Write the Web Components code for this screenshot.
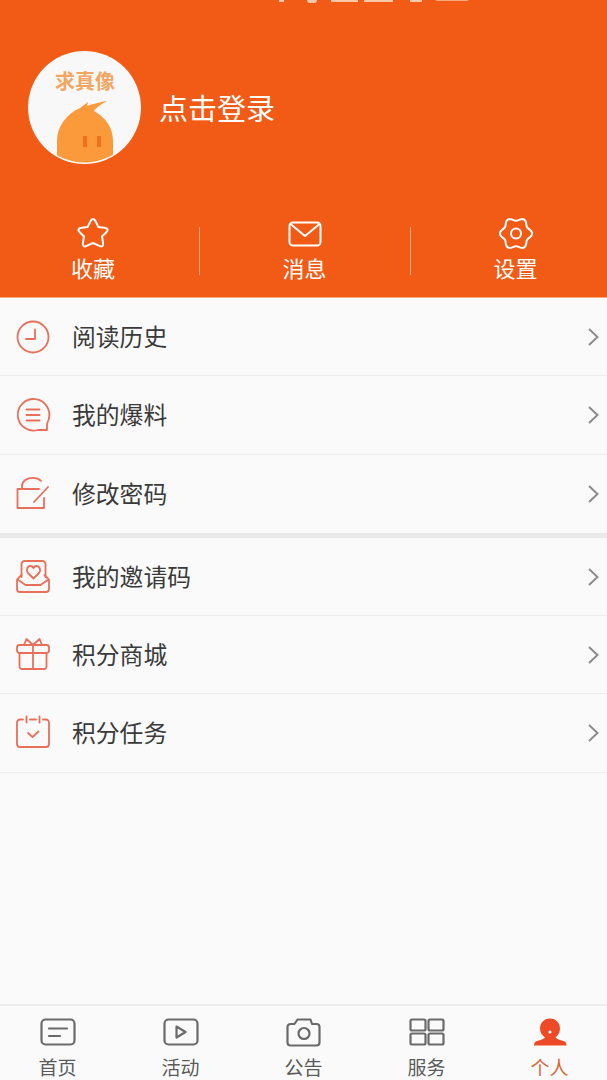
<!DOCTYPE html>
<html>
<head>
<meta charset="utf-8">
<style>
  html, body { margin: 0; padding: 0; }
  body { width: 607px; height: 1080px; overflow: hidden; background: #fafafa; font-family: "Noto Sans CJK SC", "Noto Sans", sans-serif; }
</style>
</head>
<body>
<app-page>
  <profile-header></profile-header>
  <menu-list>
    <menu-row icon="clock" label="阅读历史"></menu-row>
    <menu-row icon="chat" label="我的爆料"></menu-row>
    <menu-row icon="lock" label="修改密码"></menu-row>
  </menu-list>
  <menu-list class="second">
    <menu-row icon="invite" label="我的邀请码"></menu-row>
    <menu-row icon="gift" label="积分商城"></menu-row>
    <menu-row icon="task" label="积分任务"></menu-row>
  </menu-list>
  <tab-bar></tab-bar>
</app-page>
<script>
const menuIcons = {
  clock: `<circle cx="17" cy="17" r="15.500"/><path d="M19 9.500V19H10"/>`,
  chat: `<path d="M31 32h-9A15.800 15.800 0 1 1 32.500 22c-.8 2-1.500 3-1.500 5z"/><path d="M10.500 11.500h13M10.500 17h13M10.500 22.500h13"/>`,
  lock: `<path d="M23 12H1.500v19H28V21"/><path d="M6 12V9C6 4 11 .8 17 .8c3 0 6 1 8 3"/><path d="M18 25L32 10"/>`,
  invite: `<path d="M5.500 17V4a3 3 0 0 1 3-3h18a3 3 0 0 1 3 3v13"/><path d="M5.500 15l-3 3a3 3 0 0 0-1.500 2.500V29a3 3 0 0 0 3 3h26a3 3 0 0 0 3-3v-8.500a3 3 0 0 0-1.500-2.500l-3-3"/><path d="M1.500 19.500l8 5.500h15l8-5.500"/><path d="M17.500 18.500L12 13C9.500 10 11.500 6 14.500 6 16 6 17 7 17.500 8 18 7 19 6 20.500 6 23.500 6 25.500 10 23 13z"/>`,
  gift: `<rect x="1" y="7" width="32" height="8" rx="2.500"/><path d="M3.500 15v13.500a2.500 2.500 0 0 0 2.500 2.500h22a2.500 2.500 0 0 0 2.500-2.500V15"/><path d="M17 7v24"/><path d="M17 7L10.500 1 8 7M17 7l6.500-6L26 7"/>`,
  task: `<path d="M7 3.500H4a3 3 0 0 0-3 3V28a3 3 0 0 0 3 3h26a3 3 0 0 0 3-3V6.500a3 3 0 0 0-3-3h-3"/><path d="M14 3.500h6"/><path d="M10.500 .5v6M23.500 .5v6"/><path d="M12 17l4.500 4 6-5.500"/>`
};

// wavy six lobed outline for the settings icon
function gearPath(cx, cy) {
  let d = '';
  for (let i = 0; i < 72; i++) {
    const a = i * Math.PI / 36;
    const r = 14.4 + 1.7 * Math.cos(6 * a);
    d += (i ? 'L' : 'M') + (cx + r * Math.cos(a)).toFixed(2) + ' ' + (cy + r * Math.sin(a)).toFixed(2);
  }
  return d + 'z';
}

class AppPage extends HTMLElement {
  constructor() {
    super();
    this.attachShadow({mode: 'open'});
    this.shadowRoot.innerHTML = `
      <style>
        :host { display: flex; flex-direction: column; width: 607px; height: 1080px; background: #fafafa; }
        ::slotted(tab-bar) { margin-top: auto; }
      </style>
      <slot></slot>
    `;
  }
}
customElements.define('app-page', AppPage);

class ProfileHeader extends HTMLElement {
  constructor() {
    super();
    this.attachShadow({mode: 'open'});
    this.shadowRoot.innerHTML = `
      <style>
        * { box-sizing: border-box; }
        :host { display: block; box-sizing: border-box; height: 298px; background: #f15b16; color: #fff; border-bottom: 1px solid #f6a57c; }
        status-icons { margin-bottom: 48px; }
        .user { display: flex; align-items: center; gap: 18px; padding-left: 28px; height: 113px; }
        .avatar { width: 113px; height: 113px; flex: none; }
        .name { font-size: 29px; line-height: 36px; margin-bottom: 2px; color: #fff; }
        .actions { display: grid; grid-template-columns: 199px 211px 197px; margin-top: 53px; }
        .action { display: flex; flex-direction: column; align-items: center; gap: 1px; height: 67px; position: relative; }
        .action:first-child { padding-right: 13px; }
        .action:last-child { padding-left: 14px; }
        .action + .action::before { content: ""; position: absolute; left: 0; top: 10px; width: 1px; height: 48px; background: #f3ab82; }
        .action svg { width: 36px; height: 34px; fill: none; stroke: #fff; stroke-width: 2; stroke-linejoin: round; stroke-linecap: round; }
        .action span { font-size: 22px; line-height: 30px; }
      </style>
      <status-icons></status-icons>
      <div class="user">
        <svg class="avatar" viewBox="0 0 113 113">
          <defs><clipPath id="av"><circle cx="56.500" cy="56.500" r="55"/></clipPath></defs>
          <circle cx="56.500" cy="56.500" r="56.500" fill="#f8f8f8"/>
          <g clip-path="url(#av)">
            <path d="M29 115V90C29 76 38 63 52 57 55 55 57 53 60 51L59 55C65 53 72 51 79 50 73 53 68 57 66 60 77 66 85 76 85 90V115z" fill="#fb9a3a"/>
            <rect x="55" y="85" width="4" height="11" fill="#f2701d"/>
            <rect x="69" y="85" width="4" height="11" fill="#f2701d"/>
          </g>
          <text x="57" y="38" text-anchor="middle" font-size="20" font-weight="700" fill="#f2a662" font-family="Noto Sans CJK SC, sans-serif">求真像</text>
        </svg>
        <div class="name">点击登录</div>
      </div>
      <div class="actions">
        <div class="action">
          <svg viewBox="0 0 36 34"><path d="M18 2c1.200 0 2 .9 2.700 2.500l2.600 5.400 6 .9c3.800.6 4.300 2.200 2 4.500l-4.300 4.200 1 6c.6 3.800-.9 4.700-3.600 3.300L18 26l-6.400 2.800c-2.700 1.400-4.200.5-3.600-3.300l1-6-4.300-4.200c-2.300-2.300-1.800-3.900 2-4.500l6-.9 2.600-5.400C16 2.900 16.800 2 18 2z"/></svg>
          <span>收藏</span>
        </div>
        <div class="action">
          <svg viewBox="0 0 36 34"><rect x="2.500" y="5.500" width="31" height="23" rx="3.500"/><path d="M3.500 7L18 19 32.500 7"/></svg>
          <span>消息</span>
        </div>
        <div class="action">
          <svg viewBox="0 0 36 34"><path d="${gearPath(18, 16.500)}"/><circle cx="18" cy="16.500" r="5"/></svg>
          <span>设置</span>
        </div>
      </div>
    `;
  }
}
customElements.define('profile-header', ProfileHeader);

class StatusIcons extends HTMLElement {
  constructor() {
    super();
    this.attachShadow({mode: 'open'});
    this.shadowRoot.innerHTML = `
      <style>
        :host { display: flex; height: 3px; overflow: hidden; padding-left: 279px; }
        i { display: block; height: 2px; background: #f9c8a8; }
      </style>
      <i style="width:5px"></i>
      <i style="width:10px;margin-left:23px;height:3px;border-radius:0 0 5px 5px"></i>
      <i style="width:27px;margin-left:14px"></i>
      <i style="width:29px;margin-left:6px"></i>
      <i style="width:12px;margin-left:17px"></i>
      <i style="width:32px;margin-left:14px;height:1px;opacity:.7"></i>
    `;
  }
}
customElements.define('status-icons', StatusIcons);

class MenuList extends HTMLElement {
  constructor() {
    super();
    this.attachShadow({mode: 'open'});
    this.shadowRoot.innerHTML = `
      <style>
        :host { display: block; background: #fafafa; }
        :host(.second) { border-top: 5px solid #e9e9e9; }
      </style>
      <slot></slot>
    `;
  }
}
customElements.define('menu-list', MenuList);

class MenuRow extends HTMLElement {
  constructor() {
    super();
    this.attachShadow({mode: 'open'});
    this.shadowRoot.innerHTML = `
      <style>
        * { box-sizing: border-box; }
        :host { display: flex; box-sizing: border-box; align-items: center; height: 78.300px; padding: 0 8px 0 15.500px; border-bottom: 1px solid #ececec; }
        :host(:last-child) { border-bottom: 0; }
        :host-context(.second):host(:last-child) { border-bottom: 1px solid #ececec; }
        .icon { width: 34px; height: 34px; fill: none; stroke: #e8705a; stroke-width: 1.800; stroke-linecap: round; stroke-linejoin: round; flex: none; overflow: visible; }
        .label { margin-left: 22.500px; flex: 1; font-size: 23.800px; line-height: 32px; padding-bottom: 2px; height: 34px; color: #3a3a3a; }
        .arrow { width: 11px; height: 18px; fill: none; stroke: #8c8c8c; stroke-width: 2; flex: none; }
      </style>
      <svg class="icon" viewBox="0 0 34 34">${menuIcons[this.getAttribute('icon')]}</svg>
      <div class="label">${this.getAttribute('label')}</div>
      <svg class="arrow" viewBox="0 0 11 18"><path d="M1 1l8.500 8L1 17"/></svg>
    `;
  }
}
customElements.define('menu-row', MenuRow);

class TabBar extends HTMLElement {
  constructor() {
    super();
    this.attachShadow({mode: 'open'});
    const tabs = [
      ['首页', `<rect x="1.500" y="1.500" width="33" height="25" rx="4"/><path d="M9 10.500h18M9 18h11"/>`],
      ['活动', `<rect x="1.500" y="1.500" width="33" height="25" rx="4"/><path d="M13.500 8.500l9 5.500-9 5.500z"/>`],
      ['公告', `<path d="M5 6h3.500l3-4.500h13L26 6h4.500a3 3 0 0 1 3 3v15.500a3 3 0 0 1-3 3h-26a3 3 0 0 1-3-3V9a3 3 0 0 1 3-3z"/><circle cx="18" cy="15.500" r="5.500"/>`],
      ['服务', `<rect x="1.500" y="1.500" width="15" height="11" rx="1.500"/><rect x="19.500" y="1.500" width="15" height="11" rx="1.500"/><rect x="1.500" y="15.500" width="15" height="11" rx="1.500"/><rect x="19.500" y="15.500" width="15" height="11" rx="1.500"/>`],
      ['个人', `<path class="fill" d="M18 .5c6 0 10 4.500 10 10 0 4-2 7-4.500 9 1 1.500 4.500 2.500 8 3.500 1.800.6 3 2 3 4.500H2c0-2.500 1.200-3.900 3-4.500 3.500-1 7-2 8-3.500C10 17.500 8 14.500 8 10.500 8 5 12 .5 18 .5z"/><circle cx="18" cy="14" r="1.600" fill="#fff"/>`, true]
    ];
    this.shadowRoot.innerHTML = `
      <style>
        * { box-sizing: border-box; }
        :host { display: grid; box-sizing: border-box; grid-template-columns: repeat(5, 123px); justify-content: center; height: 76px; overflow: hidden; background: #fafafa; border-top: 2px solid #ececec; }
        .tab { display: flex; flex-direction: column; align-items: center; padding-top: 12px; color: #5a5a5a; }
        .tab.on { color: #d8683a; }
        svg { width: 36px; height: 29px; flex: none; fill: none; stroke: #6a6a6a; stroke-width: 2.200; stroke-linejoin: round; stroke-linecap: round; }
        .tab.on svg { stroke: none; }
        .tab.on svg .fill { fill: #ee4a28; }
        span { font-family: "Liberation Sans", "Noto Sans CJK SC", sans-serif; font-size: 19px; line-height: 20px; margin-top: 12px; flex: none; }
      </style>
      ${tabs.map(t => `<div class="tab${t[2] ? ' on' : ''}"><svg viewBox="0 0 36 29">${t[1]}</svg><span>${t[0]}</span></div>`).join('')}
    `;
  }
}
customElements.define('tab-bar', TabBar);
</script>
</body>
</html>
